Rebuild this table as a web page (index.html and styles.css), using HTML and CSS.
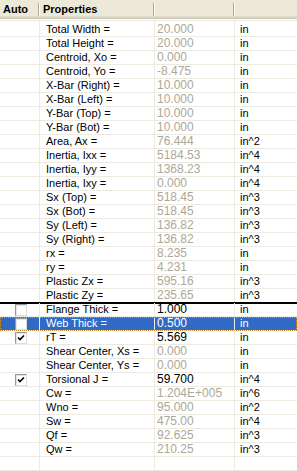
FILE: index.html
```html
<!DOCTYPE html>
<html>
<head>
<meta charset="utf-8">
<link rel="stylesheet" href="styles.css">
</head>
<body>
<div class="list">
  <div class="header">
    <div class="hcell">Auto</div>
    <div class="hcell">Properties</div>
    <div class="hcell"></div>
    <div class="hcell last"></div>
  </div>
  <div class="body">
    <div class="row first"><div class="c auto"></div><div class="c prop">Total Width =</div><div class="c val dim">20.000</div><div class="c unit">in</div></div>
    <div class="row"><div class="c auto"></div><div class="c prop">Total Height =</div><div class="c val dim">20.000</div><div class="c unit">in</div></div>
    <div class="row"><div class="c auto"></div><div class="c prop">Centroid, Xo =</div><div class="c val dim">0.000</div><div class="c unit">in</div></div>
    <div class="row"><div class="c auto"></div><div class="c prop">Centroid, Yo =</div><div class="c val dim">-8.475</div><div class="c unit">in</div></div>
    <div class="row"><div class="c auto"></div><div class="c prop">X-Bar (Right) =</div><div class="c val dim">10.000</div><div class="c unit">in</div></div>
    <div class="row"><div class="c auto"></div><div class="c prop">X-Bar (Left) =</div><div class="c val dim">10.000</div><div class="c unit">in</div></div>
    <div class="row"><div class="c auto"></div><div class="c prop">Y-Bar (Top) =</div><div class="c val dim">10.000</div><div class="c unit">in</div></div>
    <div class="row"><div class="c auto"></div><div class="c prop">Y-Bar (Bot) =</div><div class="c val dim">10.000</div><div class="c unit">in</div></div>
    <div class="row"><div class="c auto"></div><div class="c prop">Area, Ax =</div><div class="c val dim">76.444</div><div class="c unit">in^2</div></div>
    <div class="row"><div class="c auto"></div><div class="c prop">Inertia, Ixx =</div><div class="c val dim">5184.53</div><div class="c unit">in^4</div></div>
    <div class="row"><div class="c auto"></div><div class="c prop">Inertia, Iyy =</div><div class="c val dim">1368.23</div><div class="c unit">in^4</div></div>
    <div class="row"><div class="c auto"></div><div class="c prop">Inertia, Ixy =</div><div class="c val dim">0.000</div><div class="c unit">in^4</div></div>
    <div class="row"><div class="c auto"></div><div class="c prop">Sx (Top) =</div><div class="c val dim">518.45</div><div class="c unit">in^3</div></div>
    <div class="row"><div class="c auto"></div><div class="c prop">Sx (Bot) =</div><div class="c val dim">518.45</div><div class="c unit">in^3</div></div>
    <div class="row"><div class="c auto"></div><div class="c prop">Sy (Left) =</div><div class="c val dim">136.82</div><div class="c unit">in^3</div></div>
    <div class="row"><div class="c auto"></div><div class="c prop">Sy (Right) =</div><div class="c val dim">136.82</div><div class="c unit">in^3</div></div>
    <div class="row"><div class="c auto"></div><div class="c prop">rx =</div><div class="c val dim">8.235</div><div class="c unit">in</div></div>
    <div class="row"><div class="c auto"></div><div class="c prop">ry =</div><div class="c val dim">4.231</div><div class="c unit">in</div></div>
    <div class="row"><div class="c auto"></div><div class="c prop">Plastic Zx =</div><div class="c val dim">595.16</div><div class="c unit">in^3</div></div>
    <div class="row before-sep"><div class="c auto"></div><div class="c prop">Plastic Zy =</div><div class="c val dim">235.65</div><div class="c unit">in^3</div></div>
    <div class="row sep"><div class="c auto"><span class="cb"></span></div><div class="c prop">Flange Thick =</div><div class="c val">1.000</div><div class="c unit">in</div></div>
    <div class="row selected"><div class="c auto"><span class="cb"></span></div><div class="c prop">Web Thick =</div><div class="c val">0.500</div><div class="c unit">in</div></div>
    <div class="row"><div class="c auto"><span class="cb"><svg width="10" height="10" viewBox="0 0 10 10"><polyline points="2,4.5 4,6.5 8,2.5" fill="none" stroke="#000" stroke-width="1.6"/></svg></span></div><div class="c prop">rT =</div><div class="c val">5.569</div><div class="c unit">in</div></div>
    <div class="row"><div class="c auto"></div><div class="c prop">Shear Center, Xs =</div><div class="c val dim">0.000</div><div class="c unit">in</div></div>
    <div class="row"><div class="c auto"></div><div class="c prop">Shear Center, Ys =</div><div class="c val dim">0.000</div><div class="c unit">in</div></div>
    <div class="row"><div class="c auto"><span class="cb"><svg width="10" height="10" viewBox="0 0 10 10"><polyline points="2,4.5 4,6.5 8,2.5" fill="none" stroke="#000" stroke-width="1.6"/></svg></span></div><div class="c prop">Torsional J =</div><div class="c val">59.700</div><div class="c unit">in^4</div></div>
    <div class="row"><div class="c auto"></div><div class="c prop">Cw =</div><div class="c val dim">1.204E+005</div><div class="c unit">in^6</div></div>
    <div class="row"><div class="c auto"></div><div class="c prop">Wno =</div><div class="c val dim">95.000</div><div class="c unit">in^2</div></div>
    <div class="row"><div class="c auto"></div><div class="c prop">Sw =</div><div class="c val dim">475.00</div><div class="c unit">in^4</div></div>
    <div class="row"><div class="c auto"></div><div class="c prop">Qf =</div><div class="c val dim">92.625</div><div class="c unit">in^3</div></div>
    <div class="row"><div class="c auto"></div><div class="c prop">Qw =</div><div class="c val dim">210.25</div><div class="c unit">in^3</div></div>
    <div class="row"><div class="c auto"></div><div class="c prop"></div><div class="c val"></div><div class="c unit"></div></div>
  </div>
</div>
</body>
</html>
```
FILE: styles.css
```css
html, body {
  margin: 0;
  padding: 0;
  background: #fff;
}
body {
  width: 297px;
  height: 471px;
  overflow: hidden;
  font-family: "Liberation Sans", Arial, sans-serif;
  font-size: 11px;
  color: #000;
}
.list {
  width: 297px;
}
.header {
  display: grid;
  grid-template-columns: 40px 115px 80px 1fr;
  height: 19px;
  background: #ECE9D8;
  box-shadow: inset 0 -1px 0 #CBC7B8, inset 0 -2px 0 #D6D2C2, inset 0 -3px 0 #E2DECD;
}
.hcell {
  position: relative;
  font-weight: bold;
  line-height: 18px;
  padding-left: 3px;
  white-space: nowrap;
}
.hcell::after {
  content: "";
  position: absolute;
  top: 3px;
  bottom: 3px;
  right: 1px;
  width: 1px;
  background: #ACA899;
  box-shadow: 1px 0 0 #fff;
}
.hcell.last::after {
  display: none;
}
.body {
  margin-top: 1px;
  border-top: 1px solid #EDEBE1;
}
.row {
  display: grid;
  grid-template-columns: 40px 115px 80px 1fr;
  height: 14px;
  box-sizing: border-box;
  border-bottom: 1px solid #EDEBE1;
}
.row.first {
  height: 16px;
}
.row.first .c {
  padding-top: 2px;
}
.c {
  box-sizing: border-box;
  line-height: 13px;
  white-space: nowrap;
  overflow: hidden;
  border-right: 1px solid #EDEBE1;
}
.c.unit {
  border-right: none;
  padding-left: 5px;
}
.c.prop {
  padding-left: 6px;
}
.c.val {
  padding-left: 2px;
  font-size: 12px;
}
.c.auto {
  padding-left: 15px;
}
.dim {
  color: #ACA899;
}
.row.before-sep {
  border-bottom-color: #000;
}
.row.sep {
  box-shadow: inset 0 1px 0 #000;
}
.row.selected {
  background: #316AC5;
  color: #fff;
  outline: 1px dotted #CE953A;
  outline-offset: -1px;
}
.cb {
  display: block;
  width: 12px;
  height: 12px;
  box-sizing: border-box;
  margin-top: 1px;
  background: #fff;
  border: 1px solid;
  border-color: #979797 #DCDCDC #DCDCDC #979797;
  box-shadow: inset 1px 1px 0 #E4E4E4;
}
.cb svg {
  display: block;
}
```
